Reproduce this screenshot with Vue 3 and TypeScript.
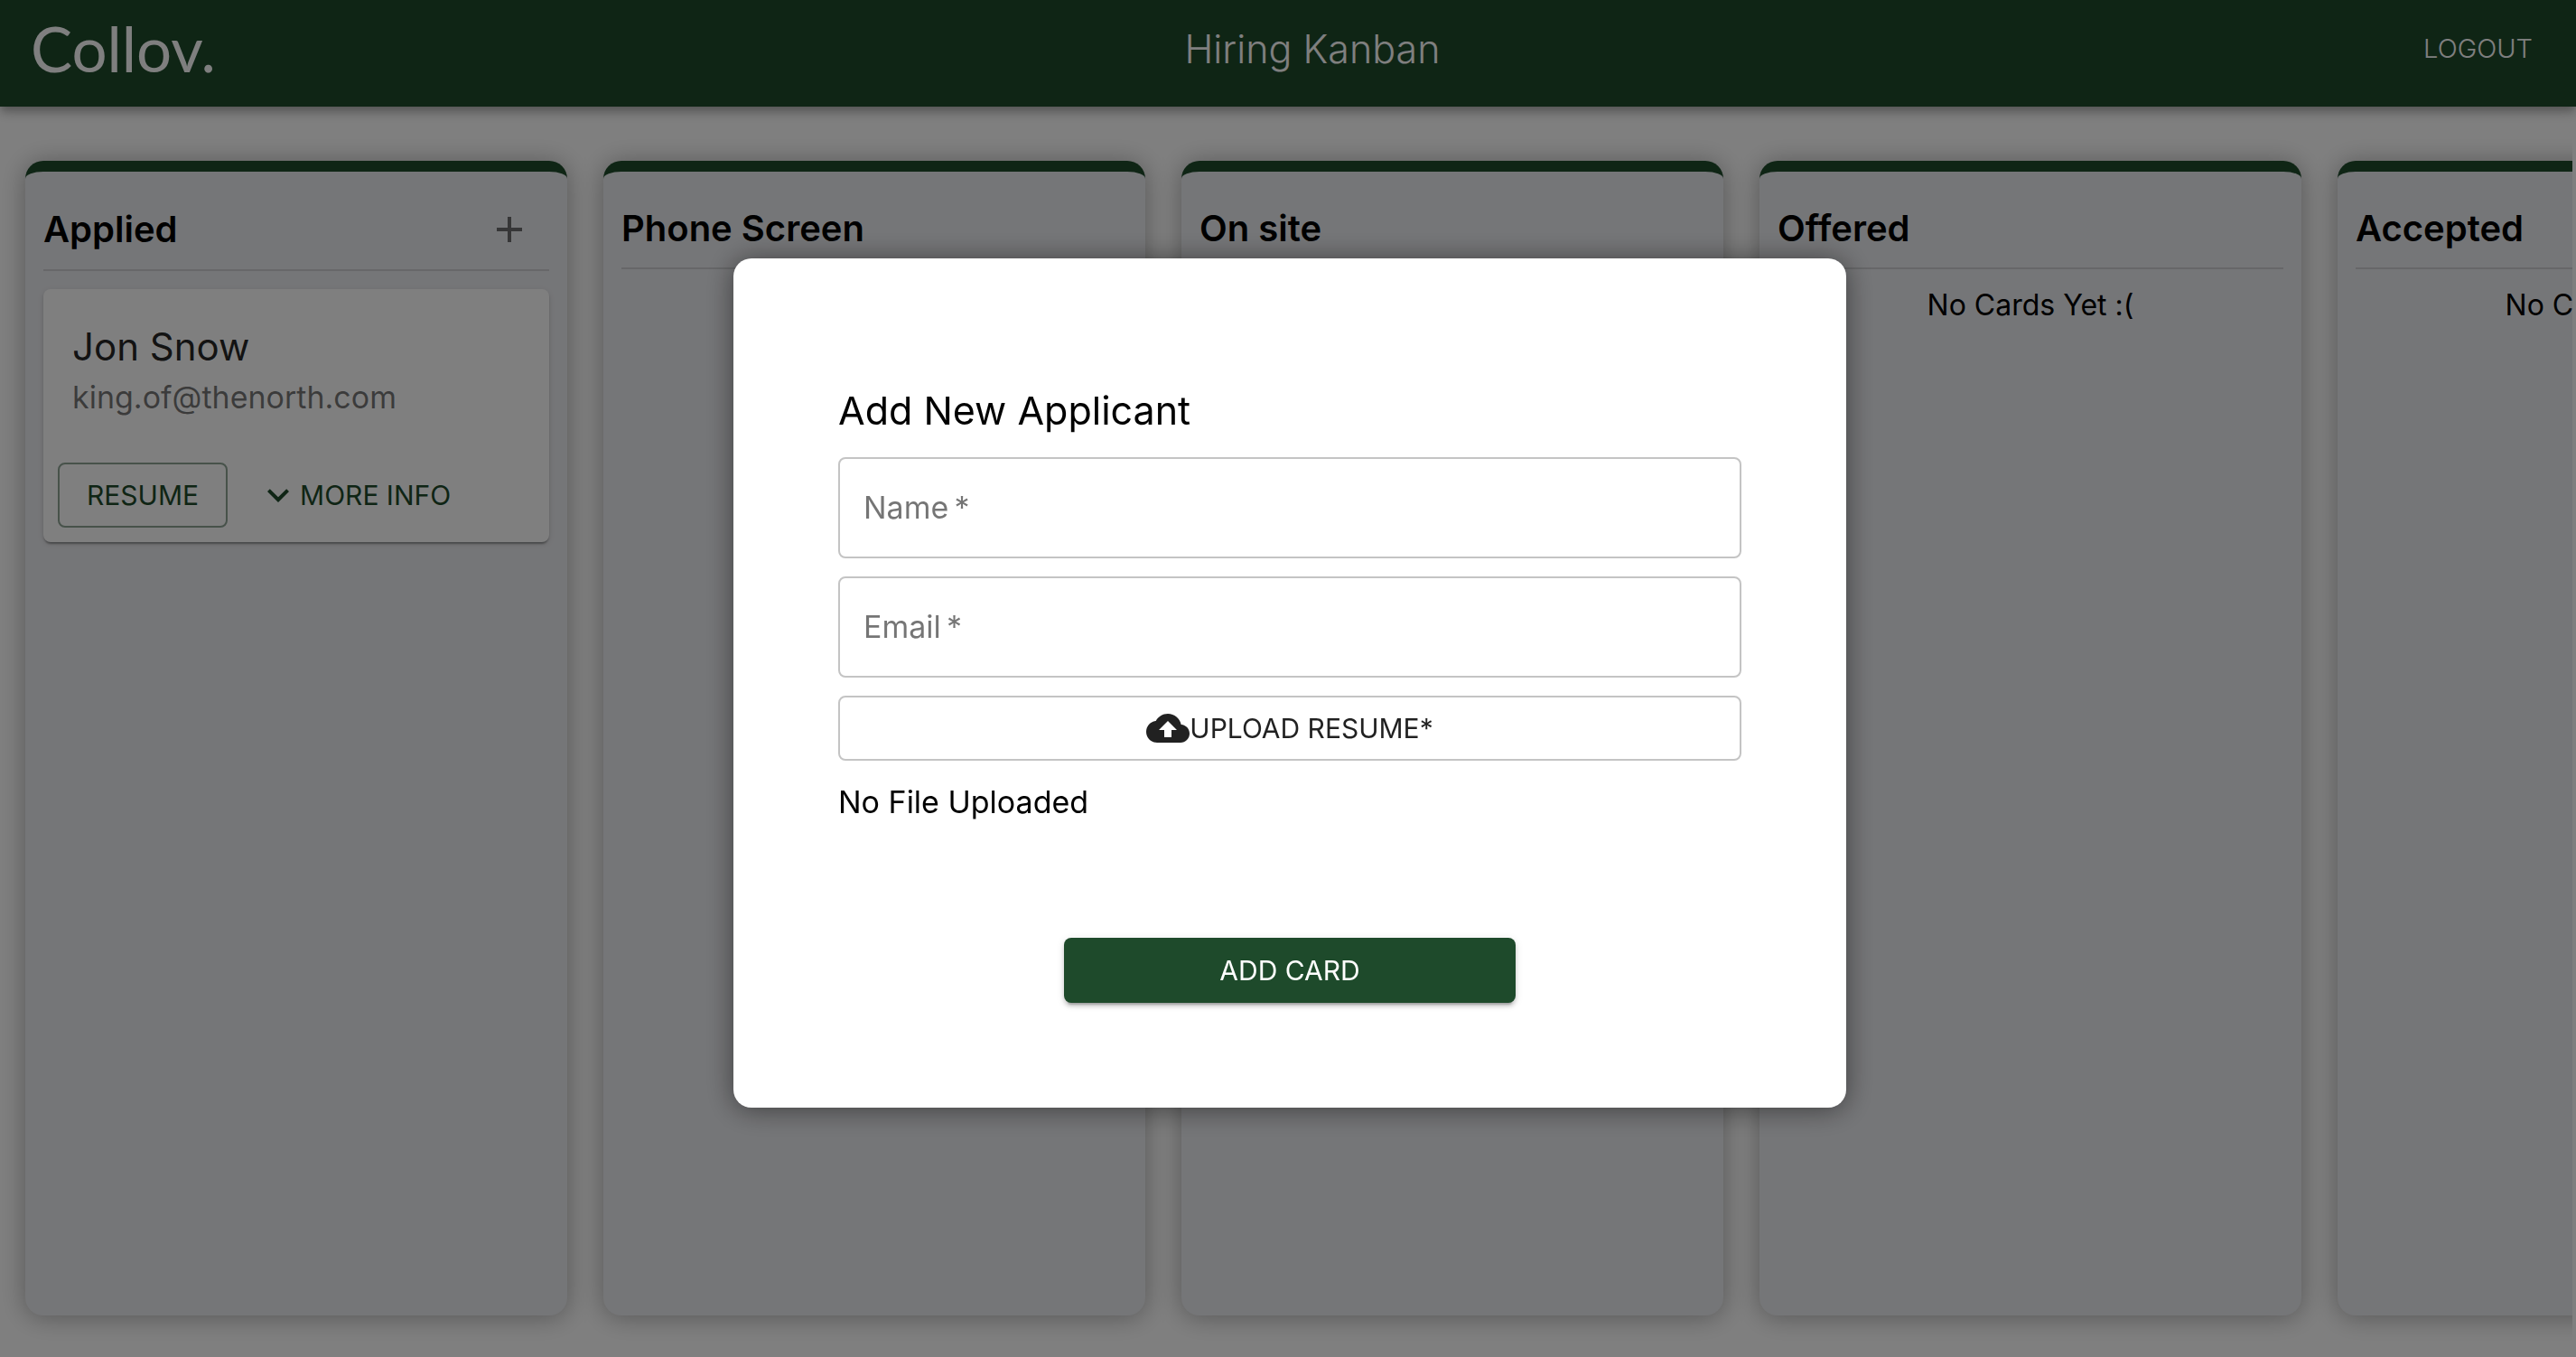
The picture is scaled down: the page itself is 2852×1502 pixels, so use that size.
<script setup lang="ts">
import { computed, ref } from 'vue'

interface Applicant {
  name: string
  email: string
}

interface Stage {
  title: string
  canAdd: boolean
  cards: Applicant[]
}

const stages = ref<Stage[]>([
  { title: 'Applied', canAdd: true, cards: [{ name: 'Jon Snow', email: 'king.of@thenorth.com' }] },
  { title: 'Phone Screen', canAdd: false, cards: [] },
  { title: 'On site', canAdd: false, cards: [] },
  { title: 'Offered', canAdd: false, cards: [] },
  { title: 'Accepted', canAdd: false, cards: [] },
])

const modalOpen = ref(true)
const name = ref('')
const email = ref('')
const fileName = ref('')
const fileStatus = computed(() => fileName.value || 'No File Uploaded')

function pickFile(event: Event) {
  const input = event.target as HTMLInputElement
  fileName.value = input.files?.[0]?.name ?? ''
}

function addCard() {
  if (!name.value || !email.value) return
  stages.value[0].cards.push({ name: name.value, email: email.value })
  name.value = ''
  email.value = ''
  fileName.value = ''
  modalOpen.value = false
}
</script>

<template>
  <div class="page">
    <header class="app-bar">
      <a class="logo" href="#">Collov.</a>
      <h1 class="app-title">Hiring Kanban</h1>
      <button class="logout" type="button">LOGOUT</button>
    </header>

    <main class="board">
      <section v-for="stage in stages" :key="stage.title" class="column">
        <header class="column-head">
          <h2>{{ stage.title }}</h2>
          <button
            v-if="stage.canAdd"
            class="icon-button"
            type="button"
            aria-label="Add applicant"
            @click="modalOpen = true"
          >
            <svg viewBox="0 0 24 24"><path d="M19 13h-6v6h-2v-6H5v-2h6V5h2v6h6v2z" /></svg>
          </button>
        </header>

        <article v-for="card in stage.cards" :key="card.email" class="card">
          <div class="card-body">
            <h3>{{ card.name }}</h3>
            <p>{{ card.email }}</p>
          </div>
          <div class="card-actions">
            <button class="button outlined" type="button">RESUME</button>
            <button class="button text" type="button">
              <svg viewBox="0 0 24 24"><path d="M16.59 8.59L12 13.17 7.41 8.59 6 10l6 6 6-6z" /></svg>
              <span>MORE INFO</span>
            </button>
          </div>
        </article>

        <p v-if="!stage.cards.length" class="empty">No Cards Yet :(</p>
      </section>
    </main>

    <div v-if="modalOpen" class="backdrop">
      <form class="modal" role="dialog" aria-labelledby="modal-title" @submit.prevent="addCard">
        <h2 id="modal-title">Add New Applicant</h2>

        <div class="field">
          <input id="name" v-model="name" type="text" />
          <label v-show="!name" for="name">Name&thinsp;*</label>
        </div>
        <div class="field">
          <input id="email" v-model="email" type="text" />
          <label v-show="!email" for="email">Email&thinsp;*</label>
        </div>

        <label class="upload" for="resume">
          <svg viewBox="0 0 24 24">
            <path
              d="M19.35 10.04C18.67 6.59 15.64 4 12 4 9.11 4 6.6 5.64 5.35 8.04 2.34 8.36 0 10.91 0 14c0 3.31 2.69 6 6 6h13c2.76 0 5-2.24 5-5 0-2.64-2.05-4.78-4.65-4.96zM14 13v4h-4v-4H7l5-5 5 5h-3z"
            />
          </svg>
          <span>UPLOAD RESUME*</span>
          <input id="resume" type="file" @change="pickFile" />
        </label>
        <p class="file-status">{{ fileStatus }}</p>

        <button class="submit" type="submit">ADD CARD</button>
      </form>
    </div>
  </div>
</template>

<style>
body {
  margin: 0;
  background: #fff;
}
</style>

<style scoped>
.page {
  --green: #1e4a2b;
  display: flex;
  flex-direction: column;
  height: 100vh;
  overflow: hidden;
  color: #000;
  font-family: Inter, 'Liberation Sans', sans-serif;
  font-size: 34px;
}

h1,
h2,
h3,
p {
  margin: 0;
  font-weight: 400;
}

button,
input {
  margin: 0;
  padding: 0;
  border: 0;
  background: none;
  font: inherit;
}

* {
  box-sizing: border-box;
}

.app-bar {
  position: relative;
  display: flex;
  align-items: center;
  justify-content: space-between;
  flex: none;
  height: 118px;
  padding: 0 32px 10px 34px;
  background: var(--green);
  color: #fff;
  box-shadow:
    0 4px 8px -2px rgba(0, 0, 0, 0.2),
    0 8px 10px 0 rgba(0, 0, 0, 0.14),
    0 2px 20px 0 rgba(0, 0, 0, 0.12);
}

.logo {
  color: #fff;
  font-family: Lato, sans-serif;
  font-size: 69px;
  line-height: 76px;
  text-decoration: none;
}

.app-title {
  font-size: 43px;
  font-weight: 300;
  line-height: 64px;
}

.logout {
  padding: 0 16px;
  color: #fff;
  font-size: 29px;
  font-weight: 300;
  line-height: 48px;
}

.board {
  display: flex;
  flex: 1;
  gap: 40px;
  min-height: 0;
  margin-right: 4px;
  padding: 60px 0 46px 28px;
  overflow: hidden;
}

.column {
  flex: none;
  width: 600px;
  padding: 20px;
  border-top: 12px solid var(--green);
  border-radius: 20px;
  background: #ebecf0;
  box-shadow: 0 2px 28px rgba(0, 0, 0, 0.32);
}

.column-head {
  display: flex;
  align-items: center;
  justify-content: space-between;
  padding: 14px 14px 14px 0;
  border-bottom: 2px solid rgba(0, 0, 0, 0.12);
}

.column-head h2 {
  font-size: 40px;
  font-weight: 600;
  line-height: 58px;
}

.icon-button {
  display: flex;
  padding: 6px;
  color: rgba(0, 0, 0, 0.54);
}

svg {
  width: 48px;
  height: 48px;
  fill: currentColor;
}

.card {
  margin-top: 20px;
  border-radius: 8px;
  background: #fff;
  box-shadow:
    0 4px 2px -2px rgba(0, 0, 0, 0.2),
    0 2px 2px 0 rgba(0, 0, 0, 0.14),
    0 2px 6px 0 rgba(0, 0, 0, 0.12);
}

.card-body {
  padding: 32px;
}

.card-body h3 {
  color: rgba(0, 0, 0, 0.87);
  font-size: 42px;
  line-height: 64px;
}

.card-body p {
  color: rgba(0, 0, 0, 0.54);
  line-height: 48px;
}

.card-actions {
  display: flex;
  gap: 16px;
  padding: 16px;
}

.button {
  display: flex;
  align-items: center;
  height: 72px;
  border-radius: 8px;
  color: var(--green);
  font-size: 30px;
}

.outlined {
  padding: 0 30px;
  border: 2px solid rgba(30, 74, 43, 0.5);
}

.text {
  padding: 0 16px;
}

.empty {
  padding-top: 14px;
  font-size: 32px;
  line-height: 52px;
  text-align: center;
}

.backdrop {
  position: fixed;
  inset: 0;
  display: flex;
  align-items: flex-start;
  justify-content: center;
  padding: 286px 0 0 4px;
  background: rgba(0, 0, 0, 0.5);
}

.modal {
  display: flex;
  flex-direction: column;
  gap: 20px;
  width: 1232px;
  padding: 136px 116px 116px;
  border-radius: 20px;
  background: #fff;
  box-shadow: 0 2px 30px rgba(0, 0, 0, 0.48);
}

.modal h2 {
  font-size: 43px;
  line-height: 64px;
}

.field {
  display: grid;
  align-items: center;
  height: 112px;
  border: 2px solid #c4c4c4;
  border-radius: 8px;
}

.field > * {
  grid-area: 1 / 1;
}

.field input {
  width: 100%;
  height: 100%;
  padding: 0 26px;
  border-radius: 6px;
}

.field label {
  padding: 0 26px;
  color: rgba(0, 0, 0, 0.54);
  line-height: 48px;
  pointer-events: none;
}

.upload {
  position: relative;
  display: flex;
  align-items: center;
  justify-content: center;
  height: 72px;
  border: 2px solid #c4c4c4;
  border-radius: 8px;
  color: rgba(0, 0, 0, 0.87);
  font-size: 30px;
}

.upload input {
  position: absolute;
  inset: 0;
  width: 100%;
  opacity: 0;
}

.file-status {
  line-height: 52px;
}

.submit {
  align-self: center;
  width: 50%;
  height: 72px;
  margin-top: 104px;
  border-radius: 8px;
  background: var(--green);
  color: #fff;
  font-size: 30px;
  box-shadow:
    0 6px 2px -4px rgba(0, 0, 0, 0.2),
    0 4px 4px 0 rgba(0, 0, 0, 0.14),
    0 2px 10px 0 rgba(0, 0, 0, 0.12);
}
</style>
